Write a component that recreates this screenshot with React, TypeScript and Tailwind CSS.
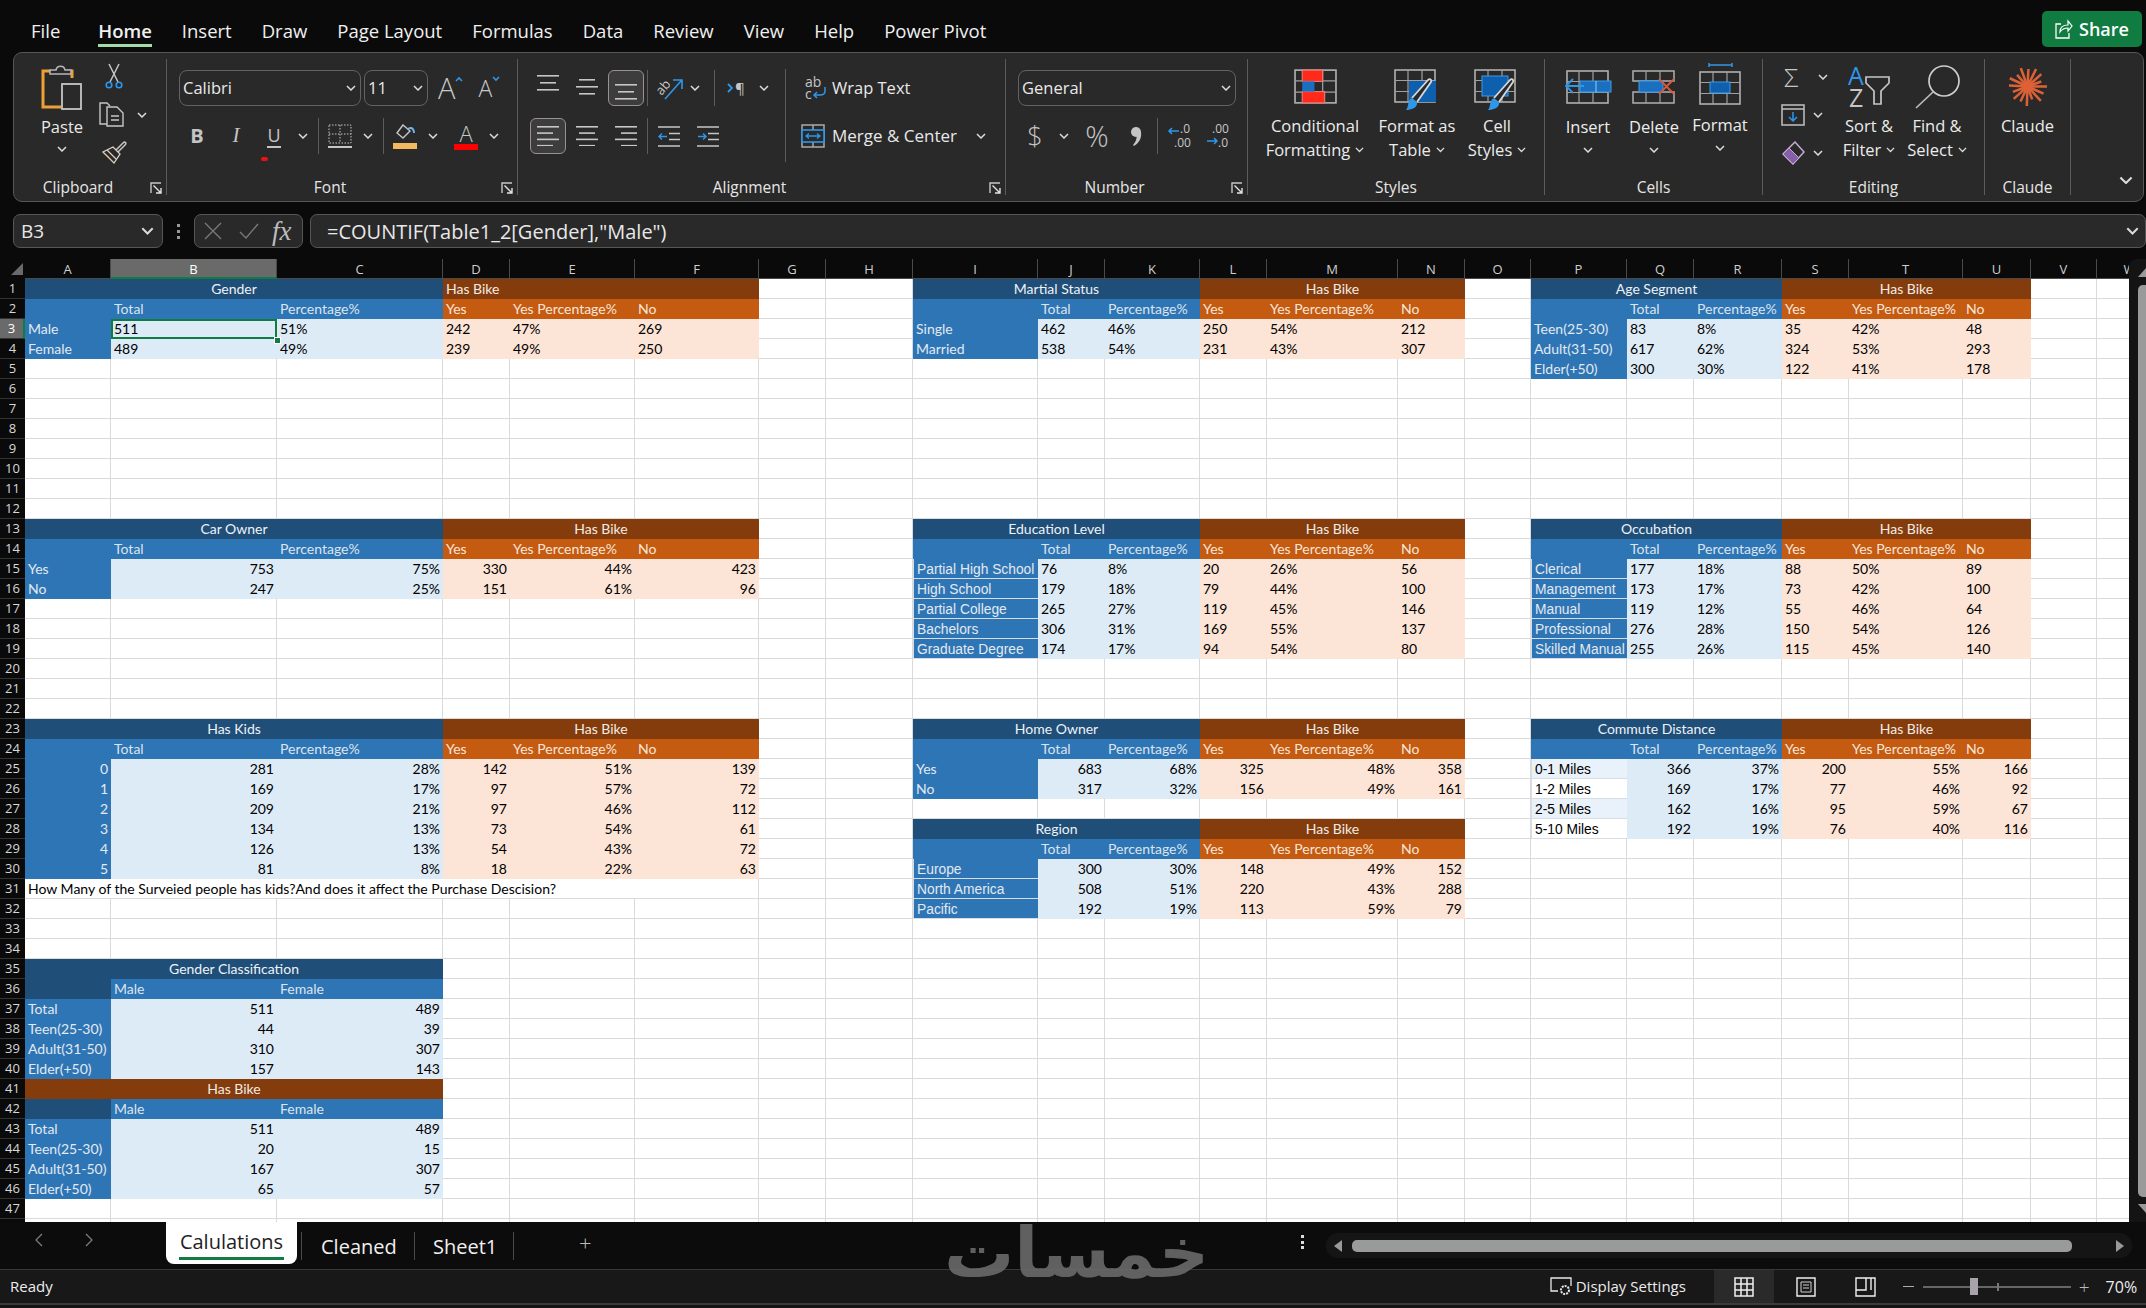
import type { ReactNode } from "react";

const G = "#c6c6c6";
const B = "#2f96e8";

type Kind = "title" | "head" | "label" | "brown" | "orange" | "light" | "peach" | "plain";
type Cell = { t?: string; k: Kind; a?: "l" | "c" | "r"; span?: number; boxed?: boolean; cover?: boolean; extra?: string };

const kindClass: Record<Kind, string> = {
  title: "bg-[#1f4e79] text-[#eef2f6]",
  head: "bg-[#2e75b6] text-[#dce4ec]",
  label: "bg-[#2e75b6] text-[#e3e9ef]",
  brown: "bg-[#843c0c] text-[#f3ebe5]",
  orange: "bg-[#c55a11] text-[#f6e6da]",
  light: "bg-[#ddebf7] text-black",
  peach: "bg-[#fce4d6] text-black",
  plain: "text-black",
};

const colNames = "ABCDEFGHIJKLMNOPQRSTUVW".split("");
const cells = new Map<string, Cell>();
const put = (c: number, r: number, cell: Cell) => cells.set(`${c}:${r}`, cell);

// one summary block: title row, header row, then a row per category
function block(
  col: number,
  row: number,
  title: string,
  rows: (string | number)[][],
  opts: { num?: "l" | "r"; bikeMerged?: boolean; boxed?: boolean; plainLabels?: boolean; labelAlign?: "l" | "r" } = {},
) {
  const num = opts.num ?? "l";
  put(col, row, { t: title, k: "title", a: "c", span: 3 });
  put(col + 1, row, { k: "title", cover: true });
  put(col + 2, row, { k: "title", cover: true });
  if (opts.bikeMerged === false) {
    put(col + 3, row, { t: "Has Bike", k: "brown" });
    put(col + 4, row, { k: "brown" });
    put(col + 5, row, { k: "brown" });
  } else {
    put(col + 3, row, { t: "Has Bike", k: "brown", a: "c", span: 3 });
    put(col + 4, row, { k: "brown", cover: true });
    put(col + 5, row, { k: "brown", cover: true });
  }
  ["", "Total", "Percentage%"].forEach((t, i) => put(col + i, row + 1, { t, k: "head" }));
  ["Yes", "Yes Percentage%", "No"].forEach((t, i) => put(col + 3 + i, row + 1, { t, k: "orange" }));
  rows.forEach((vals, y) => {
    const r = row + 2 + y;
    const shaded = y % 2 === 0;
    put(col, r, {
      t: String(vals[0]),
      k: opts.plainLabels ? "plain" : "label",
      a: opts.labelAlign ?? "l",
      boxed: opts.boxed,
      extra: opts.plainLabels ? (shaded ? "bg-[#e9f2fa]" : "bg-white") : undefined,
    });
    vals.slice(1).forEach((v, i) => put(col + 1 + i, r, { t: String(v), k: i < 2 ? "light" : "peach", a: num }));
  });
}

block(0, 1, "Gender", [["Male", 511, "51%", 242, "47%", 269], ["Female", 489, "49%", 239, "49%", 250]], { bikeMerged: false });
block(8, 1, "Martial Status", [["Single", 462, "46%", 250, "54%", 212], ["Married", 538, "54%", 231, "43%", 307]]);
block(15, 1, "Age Segment", [["Teen(25-30)", 83, "8%", 35, "42%", 48], ["Adult(31-50)", 617, "62%", 324, "53%", 293], ["Elder(+50)", 300, "30%", 122, "41%", 178]]);
block(0, 13, "Car Owner", [["Yes", 753, "75%", 330, "44%", 423], ["No", 247, "25%", 151, "61%", 96]], { num: "r" });
block(8, 13, "Education Level", [
  ["Partial High School", 76, "8%", 20, "26%", 56],
  ["High School", 179, "18%", 79, "44%", 100],
  ["Partial College", 265, "27%", 119, "45%", 146],
  ["Bachelors", 306, "31%", 169, "55%", 137],
  ["Graduate Degree", 174, "17%", 94, "54%", 80],
], { boxed: true });
block(15, 13, "Occubation", [
  ["Clerical", 177, "18%", 88, "50%", 89],
  ["Management", 173, "17%", 73, "42%", 100],
  ["Manual", 119, "12%", 55, "46%", 64],
  ["Professional", 276, "28%", 150, "54%", 126],
  ["Skilled Manual", 255, "26%", 115, "45%", 140],
], { boxed: true });
block(0, 23, "Has Kids", [
  [0, 281, "28%", 142, "51%", 139],
  [1, 169, "17%", 97, "57%", 72],
  [2, 209, "21%", 97, "46%", 112],
  [3, 134, "13%", 73, "54%", 61],
  [4, 126, "13%", 54, "43%", 72],
  [5, 81, "8%", 18, "22%", 63],
], { num: "r", labelAlign: "r" });
block(8, 23, "Home Owner", [["Yes", 683, "68%", 325, "48%", 358], ["No", 317, "32%", 156, "49%", 161]], { num: "r" });
block(8, 28, "Region", [
  ["Europe", 300, "30%", 148, "49%", 152],
  ["North America", 508, "51%", 220, "43%", 288],
  ["Pacific", 192, "19%", 113, "59%", 79],
], { num: "r", boxed: true });
block(15, 23, "Commute Distance", [
  ["0-1 Miles", 366, "37%", 200, "55%", 166],
  ["1-2 Miles", 169, "17%", 77, "46%", 92],
  ["2-5 Miles", 162, "16%", 95, "59%", 67],
  ["5-10 Miles", 192, "19%", 76, "40%", 116],
], { num: "r", boxed: true, plainLabels: true });

put(0, 31, { t: "How Many of the Surveied people has kids?And does it affect the Purchase Descision?", k: "plain", span: 6, extra: "bg-white border-r border-b border-[#dadada]" });
for (let i = 1; i < 6; i++) put(i, 31, { k: "plain", cover: true });

function genderBlock(row: number, title: string, titleKind: Kind, rows: (string | number)[][]) {
  put(0, row, { t: title, k: titleKind, a: "c", span: 3 });
  put(1, row, { k: titleKind, cover: true });
  put(2, row, { k: titleKind, cover: true });
  put(0, row + 1, { k: "title" });
  put(1, row + 1, { t: "Male", k: "head" });
  put(2, row + 1, { t: "Female", k: "head" });
  rows.forEach((v, y) => {
    put(0, row + 2 + y, { t: String(v[0]), k: "label" });
    put(1, row + 2 + y, { t: String(v[1]), k: "light", a: "r" });
    put(2, row + 2 + y, { t: String(v[2]), k: "light", a: "r" });
  });
}
genderBlock(35, "Gender Classification", "title", [["Total", 511, 489], ["Teen(25-30)", 44, 39], ["Adult(31-50)", 310, 307], ["Elder(+50)", 157, 143]]);
genderBlock(41, "Has Bike", "brown", [["Total", 511, 489], ["Teen(25-30)", 20, 15], ["Adult(31-50)", 167, 307], ["Elder(+50)", 65, 57]]);

function Chevron({ color = "#dcdcdc", w = 10 }: { color?: string; w?: number }) {
  return (
    <svg width={w} height={w * 0.6} viewBox="0 0 10 6" fill="none" className="shrink-0">
      <path d="M1 1l4 4 4-4" stroke={color} strokeWidth="1.5" />
    </svg>
  );
}

function Sep({ className = "" }: { className?: string }) {
  return <div className={`w-px shrink-0 bg-[#5c5c5c] ${className}`} />;
}

function Launcher() {
  return (
    <svg width="12" height="12" viewBox="0 0 12 12" fill="none" className="absolute right-[4px] bottom-[7px]">
      <path d="M1 11V1h10" stroke="#c8c8c8" strokeWidth="1.4" />
      <path d="M3.5 3.5L10.5 10.5M6 11h5V6" stroke="#e4e4e4" strokeWidth="1.4" />
    </svg>
  );
}

function Group({ w, label, launcher, children }: { w: string; label: string; launcher?: boolean; children: ReactNode }) {
  return (
    <div className={`relative flex h-full shrink-0 flex-col ${w}`}>
      <div className="flex h-[121px]">{children}</div>
      <div className={`flex h-[27px] items-center justify-center text-[15.5px] text-[#e6e6e6] ${launcher ? "pr-[24px]" : ""}`}>{label}</div>
      {launcher && <Launcher />}
    </div>
  );
}

function Slot({ w, children }: { w: string; children: ReactNode }) {
  return <div className={`flex h-full shrink-0 items-center justify-center ${w}`}>{children}</div>;
}

function Lines({ widths, gap = 7, align = "l", w = 22, h }: { widths: number[]; gap?: number; align?: "l" | "c" | "r"; w?: number; h?: number }) {
  const height = h ?? (widths.length - 1) * gap + 2;
  return (
    <svg width={w} height={height} viewBox={`0 0 ${w} ${height}`}>
      {widths.map((lw, i) => {
        const x = align === "l" ? 0 : align === "r" ? w - lw : (w - lw) / 2;
        return <rect key={i} x={x} y={i * gap} width={lw} height="1.6" fill={G} />;
      })}
    </svg>
  );
}

function Dropdown({ w, text }: { w: string; text: string }) {
  return (
    <div className={`flex h-[36px] shrink-0 items-center justify-between rounded-[8px] border border-[#626262] pr-[4px] pl-[3px] text-[16.5px] text-[#e8e8e8] ${w}`}>
      <span className="pt-[1px]">{text}</span>
      <Chevron />
    </div>
  );
}

function PasteIcon() {
  return (
    <svg width="42" height="46" viewBox="0 0 42 46" fill="none">
      <path d="M10 6H2v36h18" stroke="#ee9f35" strokeWidth="3" />
      <path d="M26 6h5v7" stroke="#ee9f35" strokeWidth="3" />
      <path d="M9 9V5h6c1-5 8-5 9 0h6v4z" stroke="#b5b5b5" strokeWidth="1.6" fill="#292929" />
      <rect x="21" y="19" width="19" height="25" stroke={G} strokeWidth="1.8" fill="#292929" />
    </svg>
  );
}

function ScissorsIcon() {
  return (
    <svg width="18" height="26" viewBox="0 0 18 26" fill="none">
      <path d="M5 19L14 1M13 19L4 1" stroke={G} strokeWidth="1.5" />
      <circle cx="4" cy="22" r="2.8" stroke={B} strokeWidth="1.6" />
      <circle cx="14" cy="22" r="2.8" stroke={B} strokeWidth="1.6" />
    </svg>
  );
}

function CopyIcon() {
  return (
    <svg width="25" height="25" viewBox="0 0 25 25" fill="none">
      <path d="M8 22H1V1h7l3 3" stroke={G} strokeWidth="1.4" />
      <path d="M8 5h10l6 6v13H8z" stroke={G} strokeWidth="1.4" fill="#292929" />
      <path d="M12 14h8M12 18h8" stroke={G} strokeWidth="1.4" />
    </svg>
  );
}

function PainterIcon() {
  return (
    <svg width="25" height="24" viewBox="0 0 25 24" fill="none">
      <path d="M14 9l7-7c2-2 4 0 2 2l-7 7" stroke={G} strokeWidth="1.5" />
      <path d="M11 6l7 7-6 9L1 11z" stroke="#d8d0c4" strokeWidth="1.3" />
      <path d="M6 15l6 7-11-11z" fill="#f2b35c" />
      <path d="M5 9l9 9" stroke="#d8d0c4" strokeWidth="1.2" />
    </svg>
  );
}

function GrowFont({ grow }: { grow: boolean }) {
  const size = grow ? "text-[29px]" : "text-[23px]";
  return (
    <div className="flex items-start">
      <span className={`leading-[34px] font-light text-[#c8c8c8] ${size}`}>A</span>
      <svg width="8" height="6" viewBox="0 0 8 6" fill="none" className="mt-[5px]">
        <path d={grow ? "M1 5l3-3 3 3" : "M1 1l3 3 3-3"} stroke={B} strokeWidth="1.6" />
      </svg>
    </div>
  );
}

function BordersIcon() {
  return (
    <svg width="24" height="24" viewBox="0 0 24 24" fill="none">
      <rect x="1" y="1" width="22" height="18" stroke={G} strokeDasharray="1.5 1.5" />
      <path d="M12 1v18M1 10h22" stroke={G} strokeDasharray="1.5 1.5" />
      <path d="M0 23h24" stroke="#eee" strokeWidth="1.6" />
    </svg>
  );
}

function FillIcon() {
  return (
    <svg width="24" height="25" viewBox="0 0 24 25" fill="none">
      <path d="M10 1L4 9l6 5 7-7z" stroke={G} strokeWidth="1.4" />
      <path d="M15 5c5-3 6 2 6 4" stroke="#6cb4ea" strokeWidth="2" />
      <rect y="19" width="24" height="6" fill="#f4b860" />
    </svg>
  );
}

function FontColorIcon() {
  return (
    <div className="flex w-[24px] flex-col items-center">
      <span className="text-[22px] leading-[20px] font-light text-[#c8c8c8]">A</span>
      <div className="mt-[1px] h-[6px] w-[24px] bg-[#ff0000]" />
    </div>
  );
}

function OrientIcon() {
  return (
    <svg width="26" height="24" viewBox="0 0 26 24" fill="none" className="overflow-visible">
      <text x="-1" y="16" fontSize="13" fill={G} transform="rotate(-50 6 12)" fontFamily="Open Sans">ab</text>
      <path d="M8 23L24 5M16 4h9v9" stroke={B} strokeWidth="1.6" />
    </svg>
  );
}

function RtlIcon() {
  return (
    <div className="flex items-center">
      <svg width="7" height="10" viewBox="0 0 7 10" fill="none" className="shrink-0">
        <path d="M1 1l4 4-4 4" stroke={B} strokeWidth="1.8" />
      </svg>
      <span className="ml-[1px] text-[15px] leading-[20px] text-[#c6c6c6]">¶</span>
    </div>
  );
}

function IndentIcon({ dir }: { dir: "in" | "out" }) {
  return (
    <svg width="22" height="21" viewBox="0 0 22 21" fill="none">
      <path d="M0 1h22M11 7.5h11M11 13.5h11M0 20h22" stroke={G} strokeWidth="1.5" />
      <path d={dir === "out" ? "M9 10.5H1M4 7.5l-3 3 3 3" : "M1 10.5h8M6 7.5l3 3-3 3"} stroke={B} strokeWidth="1.5" />
    </svg>
  );
}

function WrapIcon() {
  return (
    <svg width="21" height="24" viewBox="0 0 21 24" fill="none" className="overflow-visible">
      <text x="0" y="11" fontSize="14" fill={G} fontFamily="Open Sans">ab</text>
      <text x="0" y="23" fontSize="14" fill={G} fontFamily="Open Sans">c</text>
      <path d="M20 11v4c0 3-2 4-5 4H9M12 16l-3 3 3 3" stroke={B} strokeWidth="1.5" />
    </svg>
  );
}

function MergeIcon() {
  return (
    <svg width="24" height="24" viewBox="0 0 24 24" fill="none">
      <rect x="1" y="1" width="22" height="22" stroke="#aaa" strokeWidth="1.5" />
      <path d="M12 1v5M12 18v5" stroke="#aaa" strokeWidth="1.5" />
      <rect x="1" y="6" width="22" height="12" stroke={B} strokeWidth="1.6" fill="#292929" />
      <path d="M5 12h14M8 9.5L5 12l3 2.5M16 9.5l3 2.5-3 2.5" stroke={B} strokeWidth="1.3" />
    </svg>
  );
}

function DecimalIcon({ inc }: { inc: boolean }) {
  return (
    <svg width="26" height="26" viewBox="0 0 26 26" fill="none" fontFamily="Open Sans" fontSize="12" className="overflow-visible">
      <text x={inc ? 12 : 6} y="10" fill={G}>{inc ? ".0" : ".00"}</text>
      <text x={inc ? 6 : 12} y="24" fill={G}>{inc ? ".00" : ".0"}</text>
      <path d={inc ? "M11 8H1M4 5L1 8l3 3" : "M1 18h10M8 15l3 3-3 3"} stroke={B} strokeWidth="1.5" />
    </svg>
  );
}

function CommaIcon() {
  return (
    <svg width="12" height="19" viewBox="0 0 12 19" fill="#c4c4c4">
      <circle cx="6" cy="5" r="5" />
      <path d="M7 5h4c1 6-2 11-7 14l-1-1c3-3 4-7 4-13z" />
    </svg>
  );
}

function SheetFrame({ children }: { children?: ReactNode }) {
  return (
    <>
      <rect x="1" y="1" width="40" height="32" stroke="#b0b0b0" strokeWidth="1.6" fill="none" />
      <path d="M14 1v32M28 1v32M1 11.5h40M1 22.5h40" stroke="#a0a0a0" strokeWidth="1.2" />
      {children}
    </>
  );
}

function Brush({ x, y }: { x: number; y: number }) {
  return (
    <g transform={`translate(${x} ${y})`}>
      <path d="M8 20L24 2c2-2 4 0 3 2L13 24" stroke="#d8d8d8" strokeWidth="1.8" fill="#292929" />
      <path d="M2 32c5 0 12-2 11-8l-5-4c-5 2-3 9-6 12z" fill={B} />
    </g>
  );
}

function CondIcon() {
  return (
    <svg width="43" height="35" viewBox="0 0 42 34" fill="none">
      <SheetFrame>
        <rect x="8" y="1" width="20" height="11" fill="#ff2a1a" stroke="#f08080" />
        <rect x="8" y="22" width="22" height="11" fill="#ff2a1a" stroke="#f08080" />
        <rect x="8" y="12" width="12" height="10" fill="#1b6fc0" />
      </SheetFrame>
    </svg>
  );
}

function TableStyleIcon() {
  return (
    <svg width="46" height="42" viewBox="0 0 46 42" fill="none">
      <SheetFrame>
        <rect x="15" y="12" width="27" height="21" fill="#0f5faf" />
      </SheetFrame>
      <Brush x="10" y="9" />
    </svg>
  );
}

function CellStyleIcon() {
  return (
    <svg width="46" height="42" viewBox="0 0 46 42" fill="none">
      <SheetFrame>
        <rect x="8" y="7" width="26" height="20" fill="#0f5faf" stroke="#3a9be8" />
      </SheetFrame>
      <Brush x="12" y="9" />
    </svg>
  );
}

function InsertIcon() {
  return (
    <svg width="48" height="35" viewBox="0 0 48 35" fill="none">
      <rect x="3" y="1" width="41" height="32" stroke="#b0b0b0" strokeWidth="1.6" />
      <path d="M15 1v32M29 1v32M3 11.5h41M3 22.5h41" stroke="#a0a0a0" strokeWidth="1.2" />
      <rect x="16" y="11" width="31" height="11" fill="#1b6fc0" stroke="#3a9be8" />
      <path d="M32 11v11" stroke="#9cc8ee" />
      <path d="M20 16H2M9 9l-7 7 7 7" stroke={B} strokeWidth="1.8" />
    </svg>
  );
}

function DeleteIcon() {
  return (
    <svg width="44" height="35" viewBox="0 0 44 35" fill="none">
      <path d="M1 1h41v10H1zM1 22h41v11H1z" stroke="#b0b0b0" strokeWidth="1.5" />
      <path d="M14 1v10M28 1v10M14 22v11M28 22v11" stroke="#a0a0a0" strokeWidth="1.2" />
      <rect x="7" y="11" width="24" height="11" fill="#1b6fc0" stroke="#3a9be8" />
      <path d="M27 9l15 15M42 9L27 24" stroke="#d7583a" strokeWidth="1.8" />
    </svg>
  );
}

function FormatIcon() {
  return (
    <svg width="42" height="42" viewBox="0 0 42 42" fill="none">
      <path d="M10 2h23M10 0v4M33 0v4" stroke={B} strokeWidth="1.5" />
      <g transform="translate(0 8)">
        <SheetFrame>
          <rect x="11" y="11" width="20" height="11" fill="#0f5faf" stroke="#3a9be8" />
        </SheetFrame>
      </g>
    </svg>
  );
}

function FillDownIcon() {
  return (
    <svg width="24" height="22" viewBox="0 0 24 22" fill="none">
      <rect x="1" y="1" width="22" height="20" stroke="#b8b8b8" strokeWidth="1.6" />
      <path d="M1 5h22" stroke="#b8b8b8" strokeWidth="1.6" />
      <path d="M12 8v9M8 13l4 4 4-4" stroke={B} strokeWidth="1.5" />
    </svg>
  );
}

function ClearIcon() {
  return (
    <svg width="24" height="24" viewBox="0 0 24 24" fill="none">
      <path d="M14 1l9 10-11 12L2 13z" stroke="#c5a9cf" strokeWidth="1.5" />
      <path d="M8 7l10 10-6 6L2 13z" fill="#8560a8" stroke="#c5a9cf" />
    </svg>
  );
}

function SortIcon() {
  return (
    <svg width="42" height="42" viewBox="0 0 42 42" fill="none" fontFamily="Open Sans" className="overflow-visible">
      <text x="0" y="19" fontSize="25" fill={B}>A</text>
      <text x="1" y="41" fontSize="25" fill={G}>Z</text>
      <path d="M18 11h23v6l-8 8v13h-7V25l-8-8z" stroke={G} strokeWidth="1.7" />
    </svg>
  );
}

function FindIcon() {
  return (
    <svg width="45" height="44" viewBox="0 0 45 44" fill="none">
      <circle cx="29" cy="16" r="15" stroke="#cfcfcf" strokeWidth="1.7" />
      <path d="M18 27L1 43" stroke="#bbb" strokeWidth="1.7" />
    </svg>
  );
}

const claudeSpokes = [
  [0, 20], [24, 18], [47, 20], [70, 14], [92, 20], [115, 17], [138, 19], [160, 16],
  [183, 19], [205, 20], [228, 16], [250, 20], [273, 18], [296, 20], [318, 19], [340, 15],
];

function ClaudeIcon() {
  return (
    <svg width="41" height="41" viewBox="-21 -21 42 42">
      {claudeSpokes.map(([deg, len]) => {
        const a = (deg * Math.PI) / 180;
        return <line key={deg} x1="0" y1="0" x2={Math.cos(a) * len} y2={Math.sin(a) * len} stroke="#dd6137" strokeWidth="2.6" />;
      })}
    </svg>
  );
}

function BigButton({ w, icon, lines, top = "pt-[9px]", iconH = "h-[48px]" }: { w: string; icon: ReactNode; lines: [string, string]; top?: string; iconH?: string }) {
  return (
    <div className={`flex shrink-0 flex-col items-center text-[16.5px] leading-[24px] text-[#ececec] ${w} ${top}`}>
      <div className={`flex items-start ${iconH}`}>{icon}</div>
      <span>{lines[0]}</span>
      <span className="flex items-center gap-[5px]">
        {lines[1]}
        <Chevron w={9} />
      </span>
    </div>
  );
}

function CellsButton({ w, icon, label, low }: { w: string; icon: ReactNode; label: string; low?: boolean }) {
  return (
    <div className={`flex shrink-0 flex-col items-center pt-[9px] text-[16.5px] leading-[24px] text-[#ececec] ${w}`}>
      <div className="flex h-[43px] items-end">{icon}</div>
      <span className={low ? "mt-[10px]" : "mt-[8px]"}>{label}</span>
      <div className="mt-[8px]">
        <Chevron />
      </div>
    </div>
  );
}

function Ribbon() {
  return (
    <div className="ml-[13px] mr-[2px] flex h-[150px] shrink-0 rounded-[9px] border border-[#565656] bg-[#292929] font-['Open_Sans'] text-[#e8e8e8]">
      <Group w="w-[152px]" label="Clipboard" launcher>
        <div className="flex w-[78px] flex-col items-center pt-[12px] pl-[18px]">
          <PasteIcon />
          <span className="mt-[4px] text-[16.5px] leading-[24px]">Paste</span>
          <div className="mt-[7px]"><Chevron /></div>
        </div>
        <div className="flex flex-col pt-[10px] pl-[7px]">
          <div className="ml-[6px]"><ScissorsIcon /></div>
          <div className="mt-[13px] flex items-center gap-[13px]">
            <CopyIcon />
            <Chevron />
          </div>
          <div className="mt-[14px] ml-[3px]"><PainterIcon /></div>
        </div>
      </Group>
      <Sep className="my-[6px]" />
      <Group w="w-[350px]" label="Font" launcher>
        <div className="relative flex flex-col pt-[17px] pl-[12px]">
          <div className="flex items-center gap-[3px]">
            <Dropdown w="w-[182px]" text="Calibri" />
            <Dropdown w="w-[64px]" text="11" />
            <div className="ml-[7px]"><GrowFont grow /></div>
            <div className="ml-[12px]"><GrowFont grow={false} /></div>
          </div>
          <div className="mt-[12px] -ml-[12px] flex h-[36px] items-center">
            <Slot w="w-[13px]"><span /></Slot>
            <Slot w="w-[34px]"><span className="text-[20px] font-bold text-[#c4c4c4]">B</span></Slot>
            <Slot w="w-[44px]"><span className="font-['Liberation_Serif'] text-[21px] text-[#c4c4c4] italic">I</span></Slot>
            <Slot w="w-[32px]"><span className="border-b-2 border-[#c4c4c4] text-[18px] leading-[21px] text-[#c4c4c4]">U</span></Slot>
            <Slot w="w-[26px]"><Chevron /></Slot>
            <Sep className="ml-[2px] h-[36px]" />
            <Slot w="w-[42px]"><BordersIcon /></Slot>
            <Slot w="w-[14px]"><Chevron /></Slot>
            <Sep className="ml-[8px] h-[36px]" />
            <Slot w="w-[42px]"><FillIcon /></Slot>
            <Slot w="w-[14px]"><Chevron /></Slot>
            <Slot w="ml-[7px] w-[38px]"><FontColorIcon /></Slot>
            <Slot w="w-[18px]"><Chevron /></Slot>
          </div>
          <div className="absolute top-[104px] left-[94px] h-[4px] w-[7px] rounded-full bg-[#ee1111]" />
        </div>
      </Group>
      <Sep className="my-[6px]" />
      <Group w="w-[487px]" label="Alignment" launcher>
        <div className="flex w-[267px] flex-col pt-[17px] pl-[12px]">
          <div className="flex h-[36px] items-center">
            <Slot w="w-[36px]"><div className="-mt-[10px]"><Lines widths={[22, 16, 22]} align="c" /></div></Slot>
            <Slot w="ml-[2px] w-[38px]"><div className="-mt-[2px]"><Lines widths={[16, 22, 16]} align="c" /></div></Slot>
            <div className="ml-[2px] flex h-[36px] w-[36px] items-end justify-center rounded-[6px] border border-[#9c8f9c] bg-[#3d3d3d] pb-[5px]"><Lines widths={[22, 16, 22]} align="c" /></div>
            <Sep className="ml-[3px] h-[36px]" />
            <Slot w="ml-[9px] w-[26px]"><OrientIcon /></Slot>
            <Slot w="w-[24px]"><Chevron /></Slot>
            <Sep className="ml-[7px] h-[36px]" />
            <Slot w="ml-[12px] w-[18px]"><RtlIcon /></Slot>
            <Slot w="w-[38px]"><Chevron /></Slot>
          </div>
          <div className="mt-[12px] flex h-[36px] items-center">
            <div className="flex h-[36px] w-[36px] items-center justify-center rounded-[6px] border border-[#9c8f9c] bg-[#3d3d3d]"><Lines widths={[22, 16, 22, 16]} gap={6.3} /></div>
            <Slot w="ml-[2px] w-[38px]"><Lines widths={[22, 16, 22, 16]} gap={6.3} align="c" /></Slot>
            <Slot w="ml-[2px] w-[36px]"><Lines widths={[22, 16, 22, 16]} gap={6.3} align="r" /></Slot>
            <Sep className="ml-[3px] h-[36px]" />
            <div className="ml-[10px]"><IndentIcon dir="out" /></div>
            <div className="ml-[17px]"><IndentIcon dir="in" /></div>
          </div>
        </div>
        <Sep className="mt-[16px] mb-[12px]" />
        <div className="flex flex-col pt-[17px] pl-[15px] text-[16.5px]">
          <div className="flex h-[36px] items-center">
            <div className="ml-[4px] w-[27px]"><WrapIcon /></div>
            <span>Wrap Text</span>
          </div>
          <div className="mt-[12px] flex h-[36px] items-center">
            <div className="w-[31px]"><MergeIcon /></div>
            <span className="w-[126px] text-[17px] whitespace-nowrap">Merge &amp; Center</span>
            <div className="ml-[18px]"><Chevron /></div>
          </div>
        </div>
      </Group>
      <Sep className="my-[6px]" />
      <Group w="w-[241px]" label="Number" launcher>
        <div className="flex flex-col pt-[17px] pl-[12px]">
          <Dropdown w="w-[218px]" text="General" />
          <div className="mt-[12px] flex h-[36px] items-center text-[#c4c4c4]">
            <Slot w="w-[34px]"><span className="text-[27px] leading-[34px] font-light">$</span></Slot>
            <Slot w="w-[24px]"><Chevron /></Slot>
            <Slot w="w-[42px]"><span className="text-[29px] leading-[34px] font-light">%</span></Slot>
            <Slot w="w-[36px]"><CommaIcon /></Slot>
            <Sep className="ml-[3px] h-[36px]" />
            <Slot w="w-[46px]"><DecimalIcon inc /></Slot>
            <Slot w="w-[30px]"><DecimalIcon inc={false} /></Slot>
          </div>
        </div>
      </Group>
      <Sep className="my-[6px]" />
      <Group w="w-[296px]" label="Styles">
        <div className="flex pl-[14px]">
          <BigButton w="w-[106px]" top="pt-[16px]" iconH="h-[45px]" icon={<CondIcon />} lines={["Conditional", "Formatting"]} />
          <BigButton w="w-[98px]" top="pt-[16px]" iconH="h-[45px]" icon={<TableStyleIcon />} lines={["Format as", "Table"]} />
          <BigButton w="w-[62px]" top="pt-[16px]" iconH="h-[45px]" icon={<CellStyleIcon />} lines={["Cell", "Styles"]} />
        </div>
      </Group>
      <Sep className="my-[6px]" />
      <Group w="w-[217px]" label="Cells">
        <div className="flex pl-[10px]">
          <CellsButton w="w-[66px]" icon={<InsertIcon />} label="Insert" low />
          <CellsButton w="w-[66px]" icon={<DeleteIcon />} label="Delete" low />
          <CellsButton w="w-[66px]" icon={<FormatIcon />} label="Format" />
        </div>
      </Group>
      <Sep className="my-[6px]" />
      <Group w="w-[221px]" label="Editing">
        <div className="flex pl-[18px]">
          <div className="flex w-[51px] flex-col pt-[12px]">
            <div className="flex h-[24px] items-center">
              <span className="w-[37px] pl-[3px] text-[26px] leading-[24px] font-light text-[#c6c6c6]">Σ</span>
              <Chevron />
            </div>
            <div className="mt-[14px] flex h-[24px] items-center">
              <div className="w-[32px]"><FillDownIcon /></div>
              <Chevron />
            </div>
            <div className="mt-[14px] flex h-[24px] items-center">
              <div className="w-[32px]"><ClearIcon /></div>
              <Chevron />
            </div>
          </div>
          <BigButton w="w-[74px]" top="pt-[13px]" iconH="h-[48px]" icon={<SortIcon />} lines={["Sort &", "Filter"]} />
          <BigButton w="w-[62px]" top="pt-[12px]" iconH="h-[49px]" icon={<FindIcon />} lines={["Find &", "Select"]} />
        </div>
      </Group>
      <Sep className="my-[6px]" />
      <Group w="w-[85px]" label="Claude">
        <div className="flex w-full flex-col items-center pt-[13px] text-[16.5px] leading-[24px] text-[#ececec]">
          <div className="h-[48px]"><ClaudeIcon /></div>
          <span>Claude</span>
        </div>
      </Group>
      <Sep className="my-[6px]" />
      <div className="flex flex-1 items-end justify-end pr-[10px] pb-[17px]">
        <Chevron w={14} />
      </div>
    </div>
  );
}

function FormulaBar() {
  return (
    <div className="mt-[12px] ml-[13px] flex h-[34px] shrink-0 items-stretch font-['Open_Sans'] text-[#e8e8e8]">
      <div className="flex w-[150px] items-center justify-between rounded-[7px] border border-[#565656] bg-[#292929] pr-[8px] pl-[7px] text-[19px]">
        <span className="pt-[1px]">B3</span>
        <Chevron w={13} />
      </div>
      <div className="flex w-[31px] flex-col items-center justify-center gap-[3px]">
        <div className="h-[3px] w-[3px] bg-[#999]" />
        <div className="h-[3px] w-[3px] bg-[#999]" />
        <div className="h-[3px] w-[3px] bg-[#999]" />
      </div>
      <div className="flex w-[109px] items-center rounded-[7px] border border-[#565656] bg-[#292929]">
        <svg width="18" height="18" viewBox="0 0 18 18" fill="none" className="ml-[9px]">
          <path d="M1 1l16 16M17 1L1 17" stroke="#7a7a7a" strokeWidth="1.3" />
        </svg>
        <svg width="20" height="16" viewBox="0 0 20 16" fill="none" className="ml-[17px]">
          <path d="M1 9l6 6L19 1" stroke="#7a7a7a" strokeWidth="1.3" />
        </svg>
        <span className="ml-[13px] font-['Liberation_Serif'] text-[27px] leading-[24px] text-[#bdbdbd] italic">fx</span>
      </div>
      <div className="ml-[7px] flex flex-1 items-center justify-between rounded-[7px] border border-[#565656] bg-[#292929] pr-[6px] pl-[16px] text-[20px]">
        <span className="pt-[1px]">=COUNTIF(Table1_2[Gender],"Male")</span>
        <Chevron w={13} />
      </div>
    </div>
  );
}

function GridCell({ col, row }: { col: number; row: number }) {
  const cell = cells.get(`${col}:${row}`);
  if (cell?.cover) return null;
  const selected = col === 1 && row === 3;
  const align = cell?.a === "r" ? "text-right" : cell?.a === "c" ? "text-center" : "text-left";
  const base = cell
    ? `${kindClass[cell.k]} ${cell.extra ?? ""}`
    : "border-r border-b border-[#dadada] bg-white";
  const type = cell?.boxed
    ? "border-b border-l border-[#d6dde4] font-['Liberation_Sans'] text-[13.8px] leading-[21px]"
    : "text-[14px] leading-[20px]";
  return (
    <div
      className={`relative overflow-hidden px-[3px] whitespace-nowrap ${align} ${base} ${type}`}
      style={cell?.span ? { gridColumn: `span ${cell.span}` } : undefined}
    >
      {cell?.t}
      {selected && <div className="absolute inset-0 border-2 border-[#107c41]" />}
    </div>
  );
}

function Sheet() {
  const rows = Array.from({ length: 48 }, (_, i) => i + 1);
  return (
    <div className="relative mt-[11px] flex h-[963px] shrink-0 overflow-hidden">
      <div className="h-[963px] w-[2129px] overflow-hidden">
        <div className="grid w-[2163px] grid-cols-[25px_86px_166px_166px_67px_125px_124px_67px_87px_125px_67px_95px_67px_131px_67px_66px_96px_67px_88px_67px_114px_68px_66px_66px] grid-rows-[repeat(49,20px)] font-['Lato']">
          <div className="flex items-end justify-end bg-[#0a0a0a] pr-[2px] pb-[4px]">
            <div className="h-0 w-0 border-b-[12px] border-l-[12px] border-b-[#6a6a6a] border-l-transparent" />
          </div>
          {colNames.map((c) => (
            <div
              key={c}
              className={`border-r border-b border-[#4a4a4a] text-center font-['Open_Sans'] text-[13px] leading-[20px] ${c === "B" ? "border-b-2 border-b-[#107c41] bg-[#6a6a6a] text-white" : "bg-[#0a0a0a] text-[#cfcfcf]"}`}
            >
              {c}
            </div>
          ))}
          {rows.map((r) => (
            <div key={r} className="contents">
              <div className={`border-b border-[#333] text-center font-['Open_Sans'] text-[13px] leading-[19px] ${r === 3 ? "border-r-2 border-r-[#107c41] bg-[#6a6a6a] text-white" : "bg-[#0a0a0a] text-[#d8d8d8]"}`}>
                {r}
              </div>
              {colNames.map((_, c) => (
                <GridCell key={c} col={c} row={r} />
              ))}
            </div>
          ))}
        </div>
      </div>
      {/* green fill handle of the selected cell */}
      <div className="absolute top-[78px] left-[274px] h-[7px] w-[7px] border border-white bg-[#107c41]" />
      <div className="flex w-[17px] flex-col rounded-tl-[8px] bg-[#141414] pt-[9px] pl-[9px]">
        <div className="h-0 w-0 border-r-[8px] border-b-[9px] border-l-[8px] border-r-transparent border-b-[#9a9a9a] border-l-transparent" />
        <div className="mt-[8px] h-[912px] w-[10px] rounded-l-[5px] bg-[#9a9a9a]" />
        <div className="mt-[7px] h-0 w-0 border-t-[9px] border-r-[8px] border-l-[8px] border-t-[#9a9a9a] border-r-transparent border-l-transparent" />
      </div>
    </div>
  );
}

function TabStrip() {
  return (
    <div className="relative flex h-[48px] shrink-0 items-start border-b border-[#383838] bg-[#0c0c0c] font-['Open_Sans'] text-[20px] text-[#f0f0f0]">
      <div className="flex h-[36px] w-[166px] items-center pl-[35px]">
        <svg width="8" height="14" viewBox="0 0 8 14" fill="none"><path d="M7 1L1 7l6 6" stroke="#808080" strokeWidth="1.2" /></svg>
        <svg width="8" height="14" viewBox="0 0 8 14" fill="none" className="ml-[42px]"><path d="M1 1l6 6-6 6" stroke="#808080" strokeWidth="1.2" /></svg>
      </div>
      <div className="flex h-[42px] w-[131px] flex-col items-center rounded-b-[8px] bg-white pt-[8px] text-[#222]">
        <span className="leading-[24px]">Calulations</span>
        <div className="mt-[3px] h-[3px] w-[105px] bg-[#107c41]" />
      </div>
      <div className="mt-[10px] ml-[4px] h-[28px] w-px bg-[#4a4a4a]" />
      <span className="mt-[13px] ml-[19px] w-[93px] leading-[24px]">Cleaned</span>
      <div className="mt-[10px] h-[28px] w-px bg-[#4a4a4a]" />
      <span className="mt-[13px] ml-[18px] w-[80px] leading-[24px]">Sheet1</span>
      <div className="mt-[10px] h-[28px] w-px bg-[#4a4a4a]" />
      <span className="mt-[5px] ml-[65px] text-[22px] leading-[30px] font-light text-[#bdbdbd]">+</span>
      <div className="mt-[13px] ml-[709px] flex flex-col gap-[2.5px]">
        <div className="h-[3px] w-[3px] bg-[#ddd]" />
        <div className="h-[3px] w-[3px] bg-[#ddd]" />
        <div className="h-[3px] w-[3px] bg-[#ddd]" />
      </div>
      <div className="mt-[11px] ml-[22px] flex h-[25px] w-[806px] items-center rounded-[12px] bg-[#151515] pr-[8px] pl-[8px]">
        <div className="h-0 w-0 border-t-[6px] border-r-[8px] border-b-[6px] border-t-transparent border-r-[#9a9a9a] border-b-transparent" />
        <div className="ml-[10px] h-[12px] w-[720px] rounded-[5px] bg-[#999b9a]" />
        <div className="ml-auto h-0 w-0 border-t-[6px] border-b-[6px] border-l-[8px] border-t-transparent border-b-transparent border-l-[#9a9a9a]" />
      </div>
    </div>
  );
}

function StatusBar() {
  return (
    <div className="flex h-[33px] shrink-0 items-center bg-[#181818] font-['Open_Sans'] text-[15px] text-[#ececec]">
      <span className="ml-[10px]">Ready</span>
      <svg width="22" height="20" viewBox="0 0 22 20" fill="none" className="ml-[1497px]">
        <path d="M8 14H1V1h20v8" stroke="#e8e8e8" strokeWidth="1.3" />
        <circle cx="15" cy="13" r="4" stroke="#e8e8e8" strokeWidth="2" strokeDasharray="2 1" />
      </svg>
      <span className="ml-[4px] w-[138px] whitespace-nowrap">Display Settings</span>
      <div className="flex h-full w-[60px] items-center justify-center bg-[#2a2a2a]">
        <svg width="20" height="20" viewBox="0 0 20 20" fill="none">
          <path d="M1 1h18v18H1zM7 1v18M13 1v18M1 7h18M1 13h18" stroke="#f0f0f0" strokeWidth="1.5" />
        </svg>
      </div>
      <svg width="20" height="20" viewBox="0 0 20 20" fill="none" className="ml-[22px]">
        <path d="M1 1h18v18H1z" stroke="#f0f0f0" strokeWidth="1.4" />
        <path d="M5 5h10v10H5zM7 8h6M7 11h6" stroke="#cfcfcf" />
      </svg>
      <svg width="21" height="20" viewBox="0 0 21 20" fill="none" className="ml-[39px]">
        <path d="M1 1h19v18H1zM1 13h10V1M11 1v12M16 1v12" stroke="#f0f0f0" strokeWidth="1.4" />
      </svg>
      <span className="ml-[27px] h-[1.5px] w-[11px] bg-[#aaa]" />
      <div className="relative ml-[9px] flex h-[20px] w-[148px] items-center">
        <div className="h-[2px] w-full bg-[#666]" />
        <div className="absolute left-[47px] h-[17px] w-[8px] bg-[#a8a2aa]" />
        <div className="absolute left-[74px] h-[8px] w-[2px] bg-[#777]" />
      </div>
      <span className="ml-[8px] text-[19px] leading-[20px] font-light text-[#bbb]">+</span>
      <span className="ml-[16px] text-[16px]">70%</span>
    </div>
  );
}

export default function App() {
  const tabs = ["File", "Home", "Insert", "Draw", "Page Layout", "Formulas", "Data", "Review", "View", "Help", "Power Pivot"];
  return (
    <div className="relative flex h-[1308px] w-[2146px] flex-col overflow-hidden bg-[#0a0a0a] font-['Open_Sans']">
      {/* title tabs */}
      <div className="flex h-[52px] shrink-0 items-start pl-[31px] text-[18.5px] text-[#f0f0f0]">
        <div className="flex gap-[30px]">
          {tabs.map((t) => (
            <div key={t} className={`flex h-[47px] flex-col items-center pt-[18px] ${t === "File" ? "mr-[8px]" : ""}`}>
              <span className={`leading-[26px] whitespace-nowrap ${t === "Home" ? "font-semibold" : ""}`}>{t}</span>
              {t === "Home" && <div className="h-[3px] w-full bg-[#a3dba8]" />}
            </div>
          ))}
        </div>
        <div className="mt-[11px] mr-[4px] ml-auto flex h-[36px] w-[100px] items-center justify-center gap-[6px] rounded-[5px] bg-[#107c41] text-[18px] font-semibold text-white">
          <svg width="18" height="20" viewBox="0 0 18 20" fill="none">
            <path d="M6 5H1v14h13v-5" stroke="#fff" strokeWidth="1.3" />
            <path d="M5 13c0-5 3-7 8-7V2l4 5-4 5V9c-4 0-6 1-8 4z" stroke="#fff" strokeWidth="1.2" />
          </svg>
          Share
        </div>
      </div>
      <Ribbon />
      <FormulaBar />
      <Sheet />
      <TabStrip />
      <StatusBar />
      <div className="h-[2px] shrink-0 bg-[#3c3c3c]" />
      <div className="flex-1 bg-[#141414]" />
      {/* watermark over the sheet tabs */}
      <div dir="rtl" className="pointer-events-none absolute top-[1218px] left-[944px] font-['DejaVu_Sans'] text-[70px] leading-[70px] font-bold text-[#6a6a6a] opacity-90">
        خمسات
      </div>
    </div>
  );
}
